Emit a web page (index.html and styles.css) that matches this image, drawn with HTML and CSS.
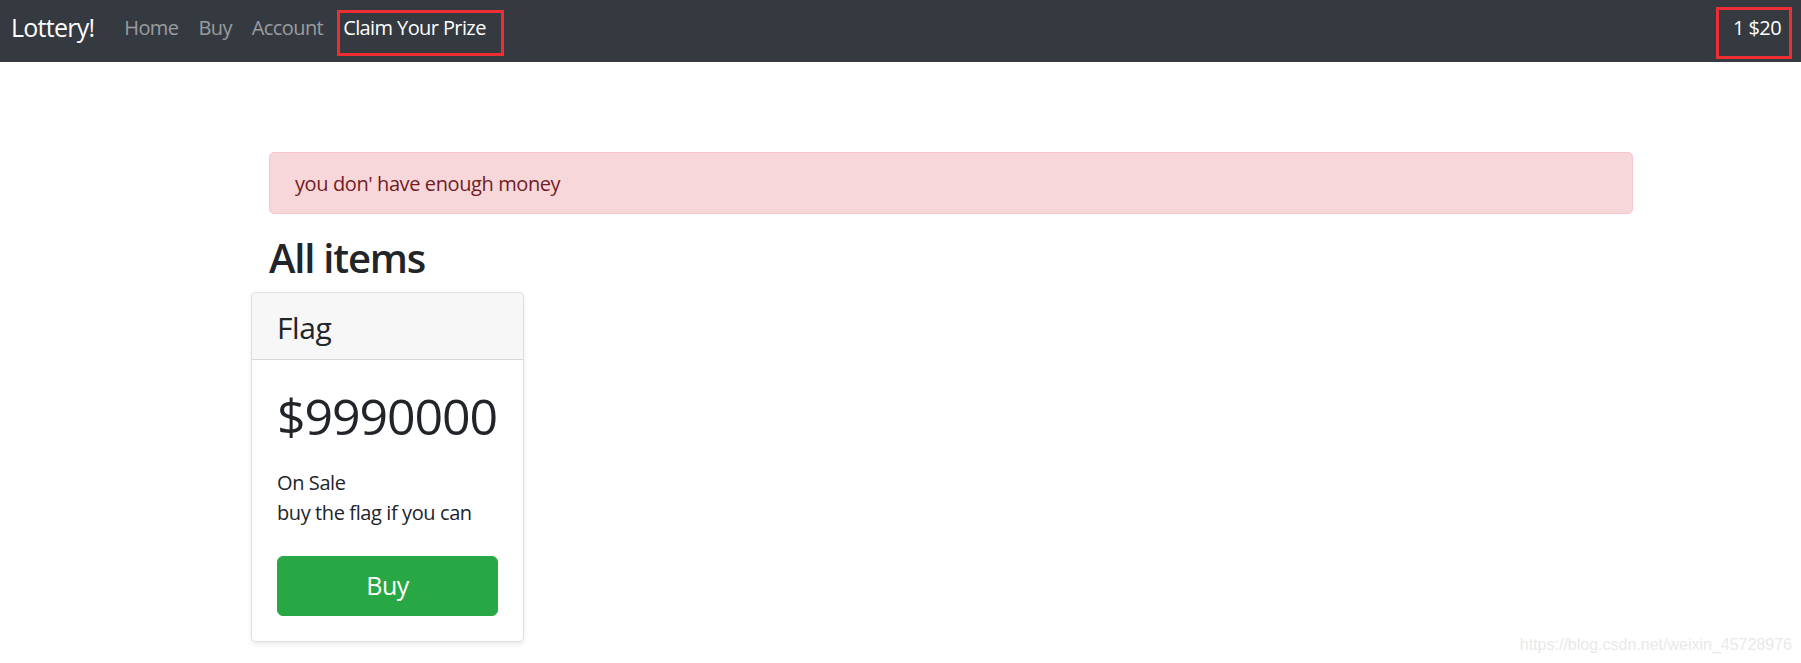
FILE: index.html
```html
<!DOCTYPE html>
<html lang="en">
<head>
<meta charset="utf-8">
<title>Lottery!</title>
<link rel="stylesheet" href="styles.css">
</head>
<body>
<nav class="navbar">
  <a class="brand" href="#">Lottery!</a>
  <ul class="nav">
    <li><a class="nav-link" href="#">Home</a></li>
    <li><a class="nav-link" href="#">Buy</a></li>
    <li><a class="nav-link" href="#">Account</a></li>
    <li><a class="nav-link active" href="#">Claim Your Prize</a></li>
  </ul>
  <div class="nav-right"><span class="nav-link active">1 $20</span></div>
</nav>

<main class="container">
  <div class="alert">you don' have enough money</div>
  <h2 class="title">All items</h2>
  <div class="card-deck">
    <div class="card">
      <div class="card-header"><h4 class="card-name">Flag</h4></div>
      <div class="card-body">
        <h1 class="price">$9990000</h1>
        <ul class="features">
          <li>On Sale</li>
          <li>buy the flag if you can</li>
        </ul>
        <button class="btn" type="button">Buy</button>
      </div>
    </div>
  </div>
</main>

<div class="mark mark-claim"></div>
<div class="mark mark-balance"></div>
<div class="watermark">https://blog.csdn.net/weixin_45728976</div>
</body>
</html>
```

FILE: styles.css
```css
* { box-sizing: border-box; }

html, body {
  margin: 0;
  padding: 0;
}

body {
  position: relative;
  font-family: "Open Sans", "Noto Sans", sans-serif;
  font-size: 20px;
  line-height: 1.5;
  letter-spacing: -0.02em;
  color: #212529;
  background: #fff;
  min-height: 663px;
}

a { text-decoration: none; }

/* ---------- navbar ---------- */
.navbar {
  display: flex;
  align-items: flex-start;
  height: 62px;
  padding: 0 10px;
  background: #343a40;
}

.brand {
  font-size: 25px;
  line-height: 37.5px;
  margin-top: 9px;
  margin-right: 20px;
  margin-left: 1px;
  letter-spacing: -0.03em;
  color: #fff;
}

.nav {
  display: flex;
  list-style: none;
  margin: 0;
  padding: 0;
}

.nav-link {
  display: block;
  padding: 0 10px;
  margin-top: 13px;
  line-height: 30px;
  letter-spacing: -0.03em;
  color: rgba(255, 255, 255, 0.5);
}

.nav-link.active { color: #fff; }

.nav-right { margin-left: auto; }

/* ---------- content ---------- */
.container {
  width: 1364px;
  margin: 90px 0 0 269px;
}

.alert {
  padding: 16px 25px 14px;
  margin-bottom: 20px;
  border: 1px solid #f5c6cb;
  border-radius: 5px;
  background: #f8d7da;
  color: #721c24;
  line-height: 30px;
}

.title {
  margin: 1px 0 10px;
  font-size: 40px;
  line-height: 48px;
  font-weight: 600;
  letter-spacing: -0.03em;
}

.card-deck {
  display: flex;
  margin-left: -18px;
}

.card {
  width: 273px;
  border: 1px solid rgba(0, 0, 0, 0.125);
  border-radius: 5px;
  background: #fff;
  box-shadow: 0 2.5px 5px rgba(0, 0, 0, 0.075);
  overflow: hidden;
}

.card-header {
  padding: 17px 25px 13px;
  background: rgba(0, 0, 0, 0.03);
  border-bottom: 1px solid rgba(0, 0, 0, 0.125);
}

.card-name {
  margin: 0;
  font-size: 30px;
  line-height: 36px;
  font-weight: 400;
}

.card-body {
  padding: 25px;
}

.price {
  margin: 1px 0 22px;
  font-size: 50px;
  line-height: 60px;
  font-weight: 400;
  letter-spacing: -0.022em;
}

.features {
  list-style: none;
  margin: 0 0 28px;
  padding: 0;
  line-height: 30px;
}

.btn {
  display: block;
  width: 100%;
  padding: 10px 20px;
  font-family: inherit;
  font-size: 25px;
  line-height: 37.5px;
  letter-spacing: -0.02em;
  color: #fff;
  background: #28a745;
  border: 1px solid #28a745;
  border-radius: 6px;
}

/* ---------- annotation overlays ---------- */
.mark {
  position: absolute;
  border: 3px solid #ee2d35;
}

.mark-claim {
  left: 337px;
  top: 10px;
  width: 167px;
  height: 46px;
}

.mark-balance {
  left: 1716px;
  top: 7px;
  width: 76px;
  height: 52px;
}

.watermark {
  position: absolute;
  right: 9px;
  top: 636px;
  font-family: "Liberation Sans", Arial, sans-serif;
  font-size: 16px;
  line-height: 18px;
  letter-spacing: 0;
  color: #e9e9e9;
}
```
